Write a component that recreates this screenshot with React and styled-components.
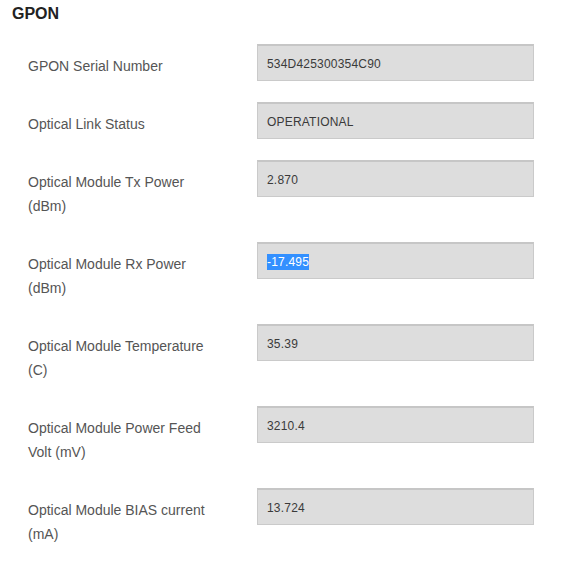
import React from 'react';
import styled, { createGlobalStyle } from 'styled-components';

const GlobalStyle = createGlobalStyle`
  body {
    margin: 0;
    background: #fff;
    font-family: "Liberation Sans", Arial, sans-serif;
  }
`;

const Section = styled.section`
  padding: 4px 12px 0;
`;

const Title = styled.h2`
  margin: 0;
  font-size: 16px;
  line-height: 20px;
  font-weight: bold;
  color: #222;
`;

const FieldList = styled.div`
  margin-top: 20px;
  padding-left: 16px;
`;

const Row = styled.div`
  display: flex;
  align-items: flex-start;
  margin-bottom: 14px;
`;

const Label = styled.div`
  width: 196px;
  margin-right: 33px;
  padding: 10px 0;
  font-size: 14px;
  line-height: 24px;
  color: #555;
`;

const Value = styled.div`
  box-sizing: border-box;
  width: 277px;
  height: 37px;
  padding: 1px 9px 0;
  background: #dddddd;
  border: 1px solid #cacaca;
  border-top: 2px solid #c6c6c6;
  font-size: 12px;
  line-height: 34px;
  color: #3a3a3a;
  letter-spacing: 0.2px;
`;

const Selected = styled.span`
  display: inline-block;
  line-height: 16px;
  background: #3390ff;
  color: #fff;
`;

const FIELDS = [
  { label: 'GPON Serial Number', value: '534D425300354C90' },
  { label: 'Optical Link Status', value: 'OPERATIONAL' },
  { label: 'Optical Module Tx Power (dBm)', value: '2.870' },
  { label: 'Optical Module Rx Power (dBm)', value: '-17.495', selected: true },
  { label: 'Optical Module Temperature (C)', value: '35.39' },
  { label: 'Optical Module Power Feed Volt (mV)', value: '3210.4' },
  { label: 'Optical Module BIAS current (mA)', value: '13.724' },
];

const App = () => {
  return (
    <>
      <GlobalStyle />
      <Section>
        <Title>GPON</Title>
        <FieldList>
          {FIELDS.map((field) => (
            <Row key={field.label}>
              <Label>{field.label}</Label>
              <Value>
                {field.selected ? <Selected>{field.value}</Selected> : field.value}
              </Value>
            </Row>
          ))}
        </FieldList>
      </Section>
    </>
  );
};

export default App;
